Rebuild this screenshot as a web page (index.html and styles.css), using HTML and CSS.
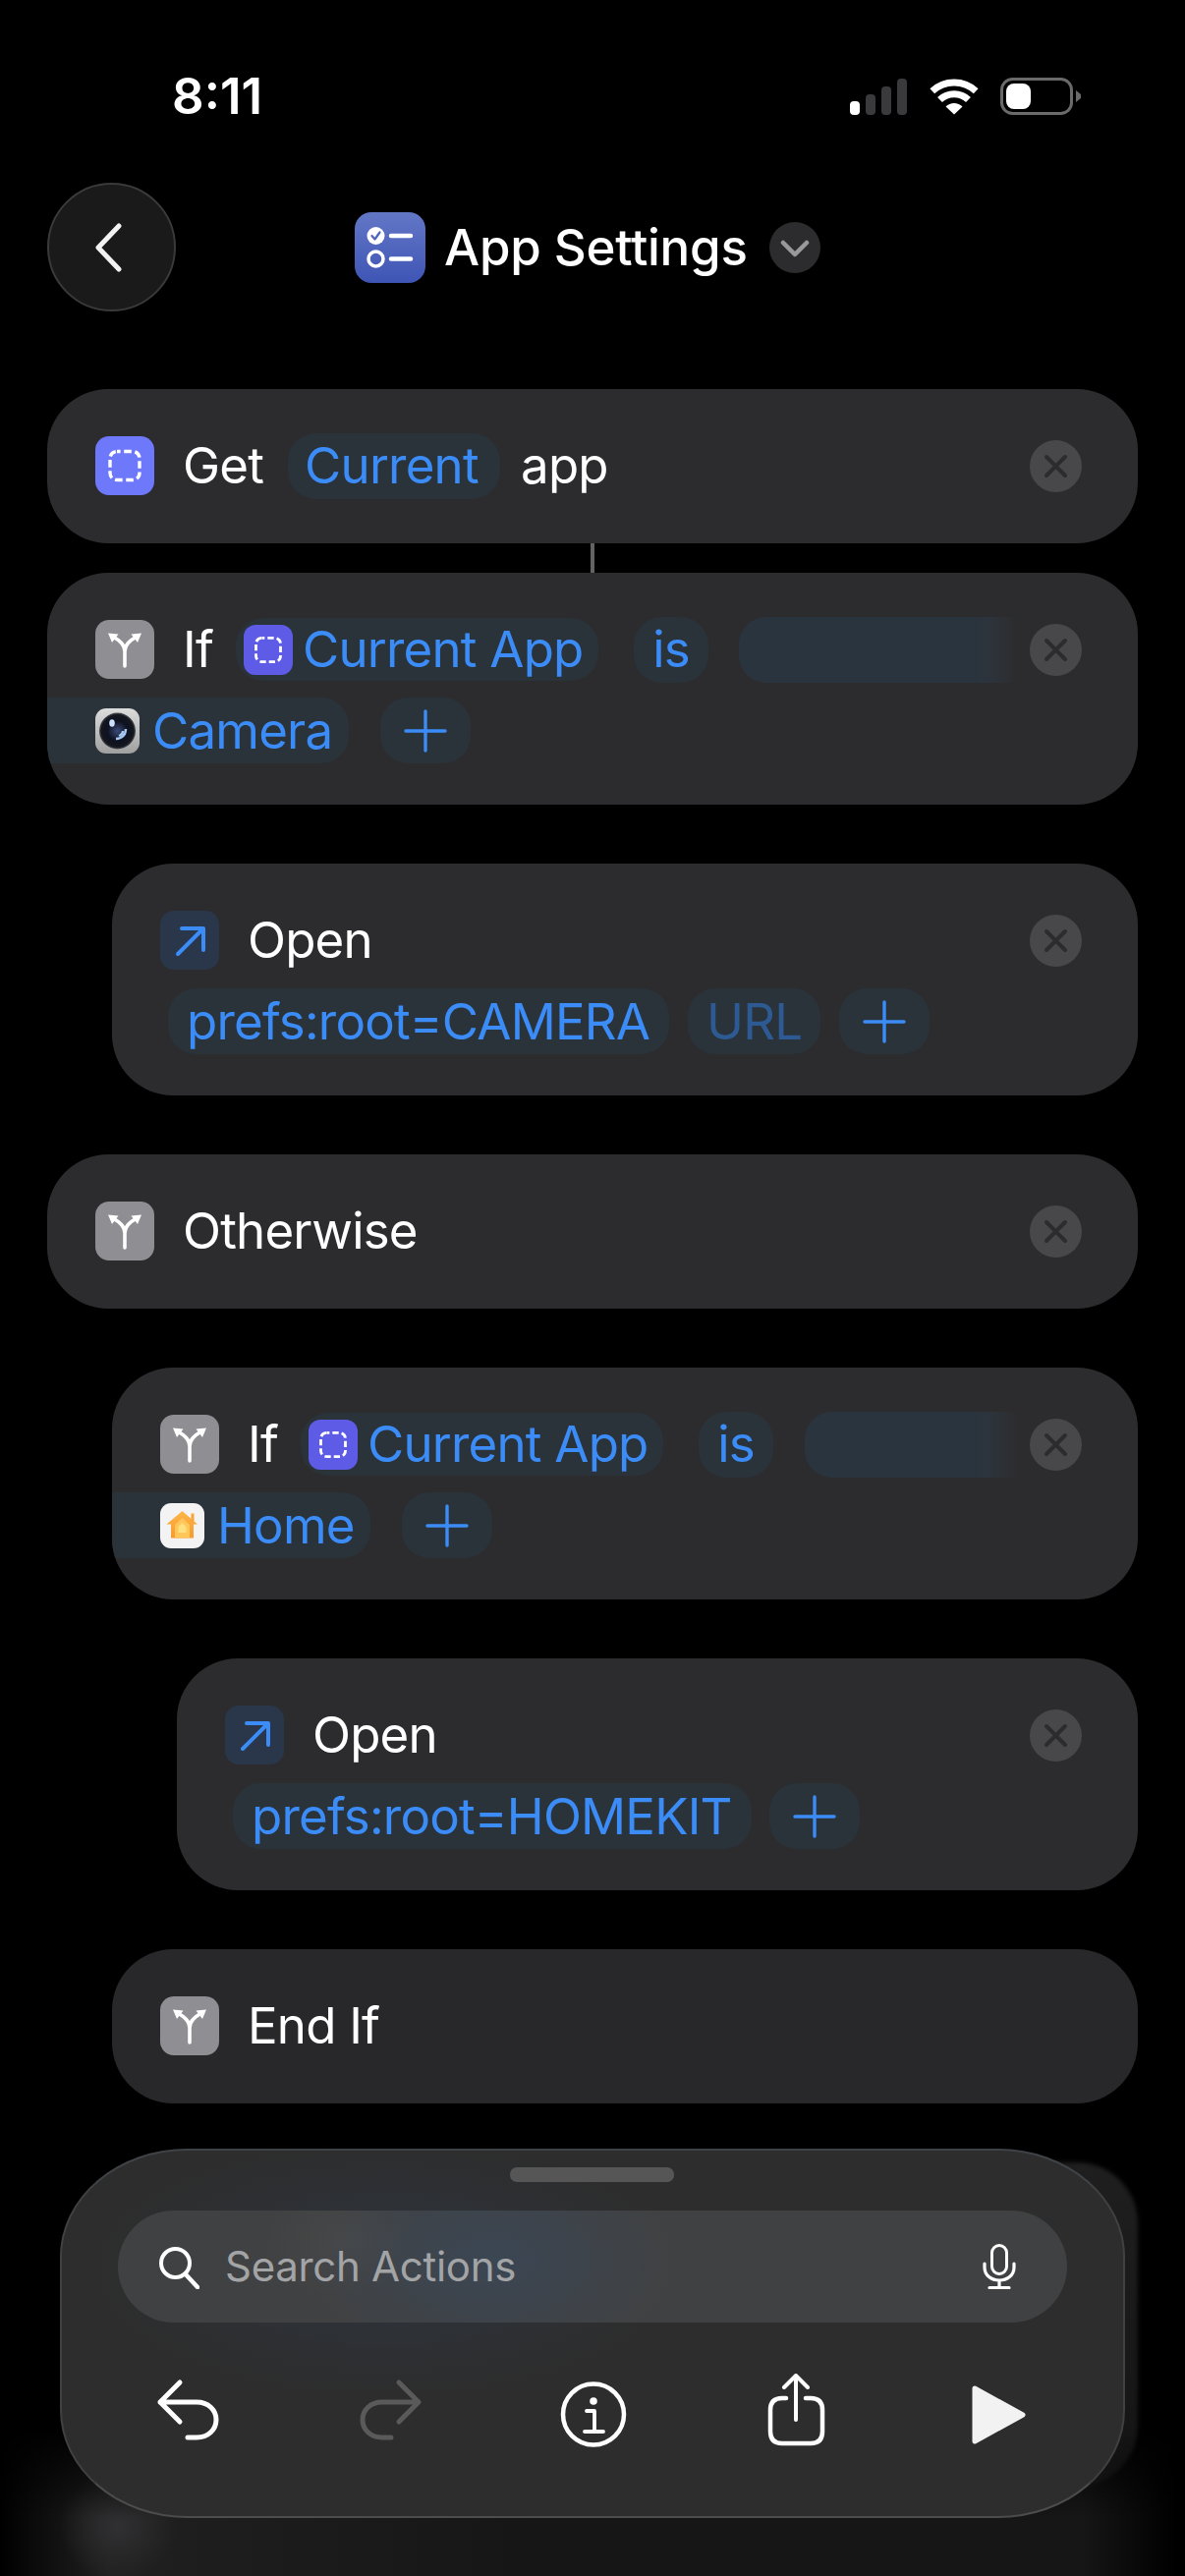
FILE: index.html
```html
<!DOCTYPE html>
<html lang="en">
<head>
<meta charset="utf-8">
<title>App Settings</title>
<link rel="stylesheet" href="styles.css">
</head>
<body>
<svg class="defs" width="0" height="0" aria-hidden="true">
  <defs>
    <symbol id="dash" viewBox="0 0 60 60">
      <rect x="15" y="15.500" width="30" height="29" rx="7" fill="none" stroke="#fff" stroke-width="3.400" stroke-dasharray="7.600 3.600" stroke-dashoffset="4"/>
    </symbol>
    <symbol id="branch" viewBox="0 0 60 60">
      <path d="M30 47V32C30 25 25 21 18 17M30 32C30 25 35 21 42 17" fill="none" stroke="#fff" stroke-width="3.600" stroke-linecap="round"/>
      <path d="M13 13.500L23.500 14.500L17 23ZM47 13.500L36.500 14.500L43 23Z" fill="#fff"/>
    </symbol>
    <symbol id="open" viewBox="0 0 60 60">
      <path d="M18 44L43 19M22 18H44V40" fill="none" stroke="#3b8cf7" stroke-width="4" stroke-linecap="round" stroke-linejoin="round"/>
    </symbol>
    <symbol id="close" viewBox="0 0 53 53">
      <circle cx="26.500" cy="26.500" r="26.500" fill="#48484a"/>
      <path d="M17 17L36 36M36 17L17 36" fill="none" stroke="#2c2c2e" stroke-width="4" stroke-linecap="round"/>
    </symbol>
    <symbol id="plus" viewBox="0 0 44 44">
      <path d="M22 2V42M2 22H42" fill="none" stroke="#3b8cf7" stroke-width="3.400" stroke-linecap="round"/>
    </symbol>
    <radialGradient id="lens" cx="50%" cy="50%" r="50%">
      <stop offset="0" stop-color="#3a4a78"/>
      <stop offset=".55" stop-color="#0e1220"/>
      <stop offset=".88" stop-color="#14161e"/>
      <stop offset="1" stop-color="#4a4c52"/>
    </radialGradient>
    <linearGradient id="silver" x1="0" y1="0" x2="0" y2="1">
      <stop offset="0" stop-color="#dcdcdc"/>
      <stop offset="1" stop-color="#a0a0a0"/>
    </linearGradient>
    <linearGradient id="house" x1="0" y1="0" x2="0" y2="1">
      <stop offset="0" stop-color="#fdb648"/>
      <stop offset="1" stop-color="#f79a2e"/>
    </linearGradient>
  </defs>
</svg>

<header class="status">
  <span class="time">8:11</span>
  <div class="status-icons">
    <svg class="signal" viewBox="0 0 58 37" aria-hidden="true">
      <rect x="0" y="23" width="10" height="14" rx="4" fill="#fff"/>
      <rect x="16" y="16" width="10" height="21" rx="4" fill="#3a3a3c"/>
      <rect x="32" y="8" width="10" height="29" rx="4" fill="#3a3a3c"/>
      <rect x="48" y="0" width="10" height="37" rx="4" fill="#3a3a3c"/>
    </svg>
    <svg class="wifi" viewBox="0 0 50 38" aria-hidden="true">
      <path d="M2.800 13.800A32.500 32.500 0 0 1 47.200 13.800M10.500 22.500A21 21 0 0 1 39.500 22.500" fill="none" stroke="#fff" stroke-width="7"/>
      <path d="M25 37.500L16.500 29.500A12 12 0 0 1 33.500 29.500Z" fill="#fff"/>
    </svg>
    <svg class="battery" viewBox="0 0 82 38" aria-hidden="true">
      <rect x="1.500" y="1.500" width="71" height="35" rx="11" fill="none" stroke="#6a6a6a" stroke-width="3"/>
      <rect x="6" y="6" width="25" height="26" rx="8" fill="#fff"/>
      <path d="M77 13L82 17V21L77 25Z" fill="#6a6a6a"/>
    </svg>
  </div>
</header>

<nav class="nav">
  <button class="back" type="button" aria-label="Back">
    <svg class="back-chevron" viewBox="0 0 30 50" aria-hidden="true">
      <path d="M25 3L4 25L25 47" fill="none" stroke="#f2f2f2" stroke-width="5" stroke-linecap="round" stroke-linejoin="round"/>
    </svg>
  </button>
  <div class="title">
    <span class="title-icon">
      <svg viewBox="0 0 72 72" aria-hidden="true">
        <circle cx="21.500" cy="24" r="9" fill="#fff"/>
        <path d="M17.500 24L20.500 27.500L25.500 20.500" fill="none" stroke="#4d65bd" stroke-width="2.200" stroke-linecap="round" stroke-linejoin="round"/>
        <circle cx="21.500" cy="47.500" r="7.500" fill="none" stroke="#fff" stroke-width="3.500"/>
        <path d="M37 24H57M37 47.500H57" fill="none" stroke="#fff" stroke-width="4.500" stroke-linecap="round"/>
      </svg>
    </span>
    <span class="title-text">App Settings</span>
    <span class="title-more">
      <svg viewBox="0 0 52 52" aria-hidden="true">
        <path d="M14 21L26 33L38 21" fill="none" stroke="#98989d" stroke-width="4.500" stroke-linecap="round" stroke-linejoin="round"/>
      </svg>
    </span>
  </div>
</nav>

<main class="flow">
  <section class="card single">
    <div class="row">
      <span class="act act-indigo"><svg><use href="#dash"/></svg></span>
      <span class="word">Get</span>
      <span class="pill pill-current">Current</span>
      <span class="word word-app">app</span>
      <svg class="close"><use href="#close"/></svg>
    </div>
  </section>
  <div class="connector"></div>
  <section class="card">
    <div class="row">
      <span class="act act-gray"><svg><use href="#branch"/></svg></span>
      <span class="word">If</span>
      <span class="pill pill-var">
        <span class="mini"><svg><use href="#dash"/></svg></span>Current App
      </span>
      <span class="pill pill-is">is</span>
      <span class="pill pill-blank"></span>
      <svg class="close"><use href="#close"/></svg>
    </div>
    <div class="row row-second">
      <span class="pill pill-edge">
        <svg class="app-icon" viewBox="0 0 45 46" aria-hidden="true">
          <rect width="45" height="46" rx="11" fill="url(#silver)"/>
          <circle cx="22.500" cy="23" r="18.500" fill="url(#lens)"/>
          <ellipse cx="17" cy="15" rx="2.800" ry="3.800" fill="#cfe0ff"/>
          <path d="M21 31C27 31 31 27 31 21M24 28C26.500 27 28 25 28 23" fill="none" stroke="#a8c6f2" stroke-width="2.400"/>
        </svg>
        <span class="edge-text-camera">Camera</span>
      </span>
      <span class="pill pill-plus pill-plus-if"><svg class="plus"><use href="#plus"/></svg></span>
    </div>
  </section>

  <section class="card indent-1">
    <div class="row">
      <span class="act act-blue"><svg><use href="#open"/></svg></span>
      <span class="word">Open</span>
      <svg class="close"><use href="#close"/></svg>
    </div>
    <div class="row row-second">
      <span class="pill pill-url">prefs:root=CAMERA</span>
      <span class="pill pill-hint">URL</span>
      <span class="pill pill-plus pill-plus-tight"><svg class="plus"><use href="#plus"/></svg></span>
    </div>
  </section>

  <section class="card single">
    <div class="row">
      <span class="act act-gray"><svg><use href="#branch"/></svg></span>
      <span class="word">Otherwise</span>
      <svg class="close"><use href="#close"/></svg>
    </div>
  </section>

  <section class="card indent-1">
    <div class="row">
      <span class="act act-gray"><svg><use href="#branch"/></svg></span>
      <span class="word">If</span>
      <span class="pill pill-var">
        <span class="mini"><svg><use href="#dash"/></svg></span>Current App
      </span>
      <span class="pill pill-is">is</span>
      <span class="pill pill-blank pill-blank-short"></span>
      <svg class="close"><use href="#close"/></svg>
    </div>
    <div class="row row-second">
      <span class="pill pill-edge">
        <svg class="app-icon" viewBox="0 0 45 46" aria-hidden="true">
          <rect width="45" height="46" rx="11" fill="#f3f3f3"/>
          <path d="M22.500 8L38 21.500H34V35.500H11V21.500H6.500Z" fill="url(#house)"/>
          <path d="M22.500 15L30 22V35.500H15V22Z" fill="#ffc65a"/>
          <path d="M22.500 20L26.500 24V30H18.500V24Z" fill="#ffe07e"/>
          <rect x="31.500" y="10.500" width="3" height="8" fill="#f9a436"/>
        </svg>
        <span class="edge-text-home">Home</span>
      </span>
      <span class="pill pill-plus pill-plus-if"><svg class="plus"><use href="#plus"/></svg></span>
    </div>
  </section>

  <section class="card indent-2">
    <div class="row">
      <span class="act act-blue"><svg><use href="#open"/></svg></span>
      <span class="word">Open</span>
      <svg class="close"><use href="#close"/></svg>
    </div>
    <div class="row row-second">
      <span class="pill pill-url">prefs:root=HOMEKIT</span>
      <span class="pill pill-plus pill-plus-wide"><svg class="plus"><use href="#plus"/></svg></span>
    </div>
  </section>

  <section class="card single indent-1 card-end">
    <div class="row">
      <span class="act act-gray"><svg><use href="#branch"/></svg></span>
      <span class="word">End If</span>
    </div>
  </section>

  <div class="ghost"></div>
</main>

<div class="glow"></div>

<aside class="dock">
  <div class="handle"></div>
  <div class="search">
    <svg class="search-icon" viewBox="0 0 42 44" aria-hidden="true">
      <circle cx="17.500" cy="17.500" r="14.500" fill="none" stroke="#fff" stroke-width="4"/>
      <path d="M27.500 28.500L40 42" fill="none" stroke="#fff" stroke-width="4.500" stroke-linecap="round"/>
    </svg>
    <span class="search-text">Search Actions</span>
    <svg class="mic" viewBox="0 0 34 46" aria-hidden="true">
      <rect x="9.500" y="1.500" width="15" height="29" rx="7.500" fill="none" stroke="#fff" stroke-width="3"/>
      <path d="M2 20V24C2 32 9 37 17 37C25 37 32 32 32 24V20M17 37V44M7 44.500H27" fill="none" stroke="#fff" stroke-width="3.200" stroke-linecap="round"/>
    </svg>
  </div>
  <div class="tools">
    <svg class="tool" viewBox="152 2415 80 80" aria-hidden="true">
      <path d="M183 2464L163 2444L183 2424M163 2444H200C212 2444 220 2452 220 2462C220 2472 212 2480 200 2480H191" fill="none" stroke="#fff" stroke-width="5" stroke-linecap="round" stroke-linejoin="round"/>
    </svg>
    <svg class="tool" viewBox="358 2415 80 80" aria-hidden="true">
      <path d="M406 2464L426 2444L406 2424M426 2444H389C377 2444 369 2452 369 2462C369 2472 377 2480 389 2480H398" fill="none" stroke="#5a5a5a" stroke-width="5" stroke-linecap="round" stroke-linejoin="round"/>
    </svg>
    <svg class="tool" viewBox="564 2415 80 80" aria-hidden="true">
      <circle cx="604" cy="2456.500" r="31" fill="none" stroke="#fff" stroke-width="4.500"/>
      <circle cx="604" cy="2443" r="3.800" fill="#fff"/>
      <path d="M597 2453H605V2474M595 2474H614" fill="none" stroke="#fff" stroke-width="3.800" stroke-linecap="round" stroke-linejoin="round"/>
    </svg>
    <svg class="tool" viewBox="769 2415 80 80" aria-hidden="true">
      <path d="M799 2440H795C787 2440 783 2444 783 2452V2474C783 2482 787 2486 795 2486H824C832 2486 836 2482 836 2474V2452C836 2444 832 2440 824 2440H819" fill="none" stroke="#fff" stroke-width="4.500" stroke-linecap="round"/>
      <path d="M809 2462V2417M797 2429L809 2417L821 2429" fill="none" stroke="#fff" stroke-width="4" stroke-linecap="round" stroke-linejoin="round"/>
    </svg>
    <svg class="tool" viewBox="979 2415 80 80" aria-hidden="true">
      <path d="M995 2430L1044 2457L995 2484Z" fill="#f2f2f2" stroke="#f2f2f2" stroke-width="5" stroke-linejoin="round"/>
    </svg>
  </div>
</aside>
</body>
</html>
```

FILE: styles.css
```css
* { box-sizing: border-box; }

html, body {
  margin: 0;
  padding: 0;
  background: #000;
}

body {
  position: relative;
  width: 1206px;
  height: 2622px;
  overflow: hidden;
  font-family: Inter, "Liberation Sans", sans-serif;
  color: #fff;
  font-size: 51px;
  letter-spacing: -0.8px;
}

.defs { position: absolute; }

/* status bar */
.status {
  display: flex;
  align-items: center;
  height: 186px;
  padding: 10px 0 0 175px;
}
.time {
  font-size: 51px;
  font-weight: 600;
  letter-spacing: 0;
  line-height: 60px;
  width: 690px;
}
.status-icons { display: flex; align-items: center; }
.signal { width: 58px; height: 37px; margin-right: 23px; }
.wifi { width: 50px; height: 38px; margin-right: 22px; }
.battery { width: 82px; height: 38px; }

/* nav */
.nav {
  display: flex;
  align-items: center;
  height: 131px;
  padding-left: 48px;
}
.back {
  width: 131px;
  height: 131px;
  border-radius: 50%;
  background: #1a1a1a;
  border: 2px solid #3a3a3a;
  padding: 0;
  display: flex;
  align-items: center;
  justify-content: center;
}
.back-chevron { width: 30px; height: 50px; margin-right: 6px; }
.title {
  display: flex;
  align-items: center;
  margin-left: 182px;
}
.title-icon {
  width: 72px;
  height: 72px;
  border-radius: 17px;
  background: linear-gradient(#6377c6, #3f55b5);
  display: block;
}
.title-icon svg { width: 72px; height: 72px; display: block; }
.title-text {
  margin-left: 19px;
  font-weight: 500;
  letter-spacing: -0.25px;
  line-height: 60px;
  white-space: nowrap;
  width: 306px;
}
.title-more {
  width: 52px;
  height: 52px;
  margin-left: 25px;
  border-radius: 50%;
  background: #2c2c2e;
}
.title-more svg { width: 52px; height: 52px; display: block; }

/* action list */
.flow {
  display: flex;
  flex-direction: column;
  gap: 60px;
  padding: 79px 48px 0;
}
.card {
  height: 236px;
  border-radius: 62px;
  background: #2c2c2e;
  padding: 44px 57px 0 49px;
  overflow: hidden;
  flex: none;
}
.card.single { height: 157px; }
.card-end { background: #28282a; }
.indent-1 { margin-left: 66px; }
.indent-2 { margin-left: 132px; }

.connector {
  width: 4px;
  height: 30px;
  margin: -60px 0 -60px 553px;
  background: #636366;
  flex: none;
}

.row {
  display: flex;
  align-items: center;
  height: 68px;
}
.row-second { margin-top: 15px; height: 67px; }

.act {
  width: 60px;
  height: 60px;
  border-radius: 14px;
  flex: none;
}
.act svg { width: 60px; height: 60px; display: block; }
.act-indigo { background: #6e78fb; }
.act-gray { background: #8e8e93; }
.act-blue { background: #2a3649; }

.word {
  margin-left: 29px;
  line-height: 60px;
  white-space: nowrap;
}
.word-app { margin-left: 21px; }

.close {
  width: 53px;
  height: 53px;
  margin-left: auto;
  flex: none;
}

.pill {
  display: flex;
  align-items: center;
  height: 67px;
  border-radius: 28px;
  background: #2a323a;
  color: #3b8cf7;
  white-space: nowrap;
  flex: none;
  line-height: 60px;
}
.pill-current {
  width: 216px;
  padding-left: 17px;
  margin-left: 25px;
}
.pill-var {
  width: 369px;
  height: 64px;
  margin-left: 23px;
  padding-left: 8px;
}
.mini {
  width: 50px;
  height: 51px;
  border-radius: 12px;
  background: #5e5ce6;
  margin-right: 10px;
  flex: none;
}
.mini svg { width: 50px; height: 51px; display: block; }
.pill-is {
  width: 76px;
  margin-left: 36px;
  justify-content: center;
}
.pill-blank {
  width: 283px;
  margin-left: 31px;
  background: linear-gradient(to right, #2a343e 0 84%, #2d333b 91%, #2c2c2e 100%);
  border-radius: 28px 0 0 28px;
}
.pill-blank-short { width: 217px; margin-left: 32px; background: linear-gradient(to right, #2a343e 0 79%, #2d333b 88%, #2c2c2e 100%); }

.pill-edge {
  margin-left: -49px;
  padding-left: 49px;
  border-radius: 0 28px 28px 0;
}
.app-icon { width: 45px; height: 46px; margin-right: 13px; flex: none; }
.edge-text-camera { width: 200px; }
.edge-text-home { width: 156px; }

.pill-plus {
  width: 92px;
  justify-content: center;
}
.pill-plus-if { margin-left: 32px; }
.pill-plus-tight { margin-left: 19px; }
.pill-plus-wide { margin-left: 18px; }
.plus { width: 44px; height: 44px; display: block; }

.pill-url {
  margin-left: 8px;
  padding: 0 20px 0 19px;
}
.pill-hint {
  width: 135px;
  margin-left: 19px;
  justify-content: center;
  color: #2d5a92;
}

/* faded card behind the dock */
.ghost {
  flex: none;
  height: 330px;
  margin-left: 66px;
  border-radius: 62px;
  background: linear-gradient(#1f1f1f, #141414);
  filter: blur(2px);
}

/* soft light below the dock */
.glow {
  position: absolute;
  left: 0;
  right: 0;
  bottom: 0;
  height: 150px;
  background:
    radial-gradient(60px 55px at 120px 100px, #303032, rgba(48,48,50,0)),
    linear-gradient(to right, rgba(0,0,0,1) 0, rgba(0,0,0,0) 110px, rgba(0,0,0,0) 1100px, rgba(0,0,0,1) 1195px),
    linear-gradient(to right, #222, #161616 45%);
  mask-image: linear-gradient(transparent, #000 60%);
}

/* dock */
.dock {
  position: absolute;
  left: 61px;
  top: 2187px;
  width: 1084px;
  height: 376px;
  border-radius: 130px / 110px;
  border: 2px solid;
  border-color: #3f4348 #404143 #4c4c4c;
  background:
    radial-gradient(300px 130px at 330px 120px, rgba(48,62,84,.45), rgba(48,62,84,0)),
    #2d2d2d;
  display: flex;
  flex-direction: column;
  align-items: flex-start;
}
.handle {
  width: 167px;
  height: 15px;
  border-radius: 7px;
  background: #565656;
  margin: 17px 0 0 456px;
}
.search {
  display: flex;
  align-items: center;
  width: 966px;
  height: 114px;
  margin: 29px 0 0 57px;
  border-radius: 57px;
  padding-left: 41px;
  background:
    radial-gradient(190px 110px at 380px 50px, rgba(56,74,96,.6), rgba(56,74,96,0)),
    radial-gradient(80px 60px at 230px 30px, rgba(74,74,74,.7), rgba(74,74,74,0)),
    #404142;
}
.search-icon { width: 42px; height: 44px; flex: none; margin-top: 2px; }
.search-text {
  margin-left: 26px;
  width: 771px;
  font-size: 42px;
  letter-spacing: -0.3px;
  line-height: 50px;
  color: #a3a4a6;
}
.mic { width: 34px; height: 46px; flex: none; }
.tools {
  display: grid;
  grid-template-columns: repeat(5, 206px);
  justify-items: center;
  margin: 52px 0 0 26px;
}
.tool { width: 80px; height: 80px; display: block; }
```
